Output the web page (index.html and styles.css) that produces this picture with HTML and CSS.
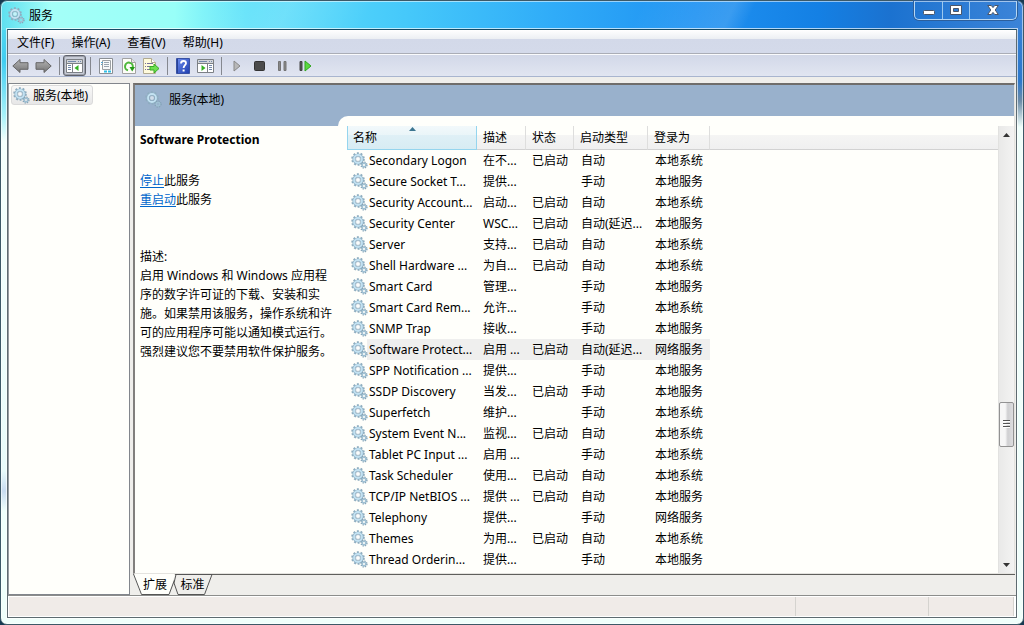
FILE: index.html
```html
<!DOCTYPE html>
<html lang="zh-CN">
<head>
<meta charset="utf-8">
<title>服务</title>
<link rel="stylesheet" href="styles.css">
</head>
<body>
<svg class="defs" aria-hidden="true">
  <defs>
    <linearGradient id="arrowFill" x1="0" y1="0" x2="0" y2="1"><stop offset="0" stop-color="#b4b4b4"/><stop offset="1" stop-color="#747474"/></linearGradient>
    <linearGradient id="helpFill" x1="0" y1="0" x2="1" y2="1"><stop offset="0" stop-color="#6f8ff0"/><stop offset="1" stop-color="#1c3cae"/></linearGradient>
    <symbol id="gear" viewBox="0 0 17 17">
      <circle cx="7" cy="7" r="5.8" fill="none" stroke="#8fadbf" stroke-width="2" stroke-dasharray="1.9 1.75"/>
      <circle cx="7" cy="7" r="4.1" fill="none" stroke="#8fb0c4" stroke-width="3"/>
      <circle cx="7" cy="7" r="4" fill="none" stroke="#c3e2f2" stroke-width="1.8"/>
      <circle cx="7" cy="7" r="2.4" fill="#f8fcff" fill-opacity=".6" stroke="#7897ab" stroke-width=".5"/>
      <circle cx="13" cy="13" r="2.9" fill="none" stroke="#7f9db0" stroke-width="1.4" stroke-dasharray="1.3 .98"/>
      <circle cx="13" cy="13" r="1.8" fill="none" stroke="#9fc0d3" stroke-width="1.5"/>
    </symbol>
  </defs>
</svg>
<div class="window">
  <header class="titlebar">
    <svg class="gear"><use href="#gear"/></svg>
    <h1 class="title">服务</h1>
    <div class="caption-buttons">
      <button class="cap cap-min" aria-label="最小化"><svg width="12" height="5"><rect x=".5" y=".5" width="11" height="4" rx="1" fill="#fff" stroke="#4a5568"/></svg></button>
      <button class="cap" aria-label="最大化"><svg width="12" height="10"><path fill-rule="evenodd" d="M.5.5h11v9H.5zM3.500 3.500v3h5v-3z" fill="#fff" stroke="#4a5568"/></svg></button>
      <button class="cap cap-close" aria-label="关闭"><svg width="12" height="10"><path d="M.7.5h3.600L6 2.600 7.700.5h3.600L8.200 5l3.100 4.500H7.700L6 7.400 4.300 9.500H.7L3.800 5z" fill="#fff" stroke="#4a5568"/></svg></button>
    </div>
  </header>
  <div class="client">
    <nav class="menubar">
      <button class="menu">文件(F)</button><button class="menu">操作(A)</button><button class="menu">查看(V)</button><button class="menu">帮助(H)</button>
    </nav>
    <div class="toolbar" role="toolbar">
      <button class="tool" aria-label="后退"><svg width="17" height="16"><path d="M.8 8 8 1.500v3.200h8v6.600H8v3.200z" fill="url(#arrowFill)" stroke="#666"/></svg></button>
      <button class="tool" aria-label="前进"><svg width="17" height="16"><path d="M16.200 8 9 1.500v3.200H1v6.600h8v3.200z" fill="url(#arrowFill)" stroke="#666"/></svg></button>
      <span class="sep"></span>
      <button class="tool pressed" aria-label="显示/隐藏控制台树"><svg width="17" height="14"><path d="M.5.5h16v13H.5z" fill="#fff" stroke="#7c8085"/><path d="M1 1h15v3H1z" fill="#d3d6da"/><path d="M1 4.500h15M6.500 5v8" stroke="#7c8085"/><path d="M2 2.500h8M12 2.500h1M14 2.500h1M2 6.500h3M2 8.500h3M2 10.500h3" stroke="#7389aa"/><path d="M12.500 6v6L8.500 9z" fill="#35b224"/></svg></button>
      <span class="sep"></span>
      <button class="tool" aria-label="属性"><svg width="16" height="16"><path d="M1.500.5h13v15h-13z" fill="#fff" stroke="#8b8f94"/><path d="M4.500 2.500h8v9h-8z" fill="#f7f9fb" stroke="#9ca0a4"/><path d="M6 4.500h5M6 6.500h5M6 8.500h5" stroke="#9aa5b0"/><path d="M3 4.500h2M3 6.500h1" stroke="#57a5d0"/><path d="M6 13.500h3M10 13.500h3" stroke="#31bde4" stroke-width="2"/></svg></button>
      <button class="tool" aria-label="刷新"><svg width="14" height="16"><path d="M.5.5h9l4 4v11H.5z" fill="#fdfdf8" stroke="#a2a2a2"/><path d="M9.500.5v4h4" fill="#e8e8e8" stroke="#a2a2a2"/><path d="M6 12.300A3.900 3.900 0 1 1 10.800 9" fill="none" stroke="#4eb83c" stroke-width="2"/><path d="M7.500 9h5.500l-2.800 4.500z" fill="#249b18"/></svg></button>
      <button class="tool" aria-label="导出列表"><svg width="17" height="16"><path d="M.5.500h8l4 4v11H.5z" fill="#fffbdc" stroke="#b1aa91"/><path d="M8.500.5v4h4" fill="#fff" stroke="#b1aa91"/><path d="M2 5.500h1M2 8.500h1M2 11.500h1M4 5.500h6M4 8.500h4M4 11.500h4" stroke="#77739a"/><path d="M7 8.500h4V6l5 4.500-5 4.500v-3H7z" fill="#6ee050" stroke="#38ad26"/></svg></button>
      <span class="sep"></span>
      <button class="tool" aria-label="帮助"><svg width="14" height="16"><path d="M.5.5h13v15H.5z" fill="url(#helpFill)" stroke="#3851a4"/><path d="M1.500 1v14" stroke="#294396"/><path d="M5 5.500C5 3.800 6 3 7.500 3S10 4 10 5.300C10 7 7.600 7.500 7.600 10" fill="none" stroke="#fff" stroke-width="1.800"/><path d="M6.600 11.500h2v2h-2z" fill="#fff"/></svg></button>
      <button class="tool" aria-label="显示/隐藏操作窗格"><svg width="17" height="14"><path d="M.5.5h16v13H.5z" fill="#fff" stroke="#7c8085"/><path d="M1 1h15v3H1z" fill="#d3d6da"/><path d="M1 4.500h15M10.500 5v8" stroke="#7c8085"/><path d="M2 2.500h8M12 2.500h1M14 2.500h1M12 6.500h3M12 8.500h3M12 10.500h3" stroke="#7389aa"/><path d="M4.500 6v6l4-3z" fill="#35b224"/></svg></button>
      <span class="sep"></span>
      <button class="tool" aria-label="启动服务"><svg width="8" height="12"><path d="M1 1v10l6-5z" fill="#b8b8b8" stroke="#888"/></svg></button>
      <button class="tool" aria-label="停止服务"><svg width="11" height="10"><rect x=".5" y=".5" width="10" height="9" rx="1" fill="#4b4b4b" stroke="#333"/></svg></button>
      <button class="tool" aria-label="暂停服务"><svg width="9" height="10"><path d="M.5.5h2v9h-2zM6 .5h2v9H6z" fill="#888" stroke="#747474"/></svg></button>
      <button class="tool" aria-label="重启动服务"><svg width="13" height="12"><path d="M1 1.500h2v9H1z" fill="#555" stroke="#444"/><path d="M6 1v10l6-5z" fill="#5bd83f" stroke="#31a51f"/></svg></button>
    </div>
    <main class="panes">
      <aside class="tree">
        <a class="node" href="#services"><svg class="gear"><use href="#gear"/></svg>服务(本地)</a>
      </aside>
      <section class="workspace" id="services">
        <div class="view">
          <div class="band"><svg class="gear"><use href="#gear"/></svg>服务(本地)</div>
          <div class="split">
            <div class="detail">
              <h2 class="name">Software Protection</h2>
              <p class="actions"><a href="#stop">停止</a>此服务<br><a href="#restart">重启动</a>此服务</p>
              <p class="desc">描述:<br>启用 Windows 和 Windows 应用程序的数字许可证的下载、安装和实施。如果禁用该服务，操作系统和许可的应用程序可能以通知模式运行。强烈建议您不要禁用软件保护服务。</p>
            </div>
            <div class="list">
              <table class="services">
                <colgroup><col class="c-name"><col class="c-desc"><col class="c-state"><col class="c-type"><col class="c-logon"><col></colgroup>
                <thead><tr><th class="sorted">名称<svg class="sort" width="7" height="4"><path d="M0 4 3.500 0 7 4z" fill="#3c7590"/></svg></th><th>描述</th><th>状态</th><th>启动类型</th><th>登录为</th><th></th></tr></thead>
                <tbody id="rows"></tbody>
              </table>
              <div class="scrollbar">
                <button class="arrow" aria-label="向上滚动"><svg width="7" height="4"><path d="M0 4 3.500 0 7 4z" fill="#333"/></svg></button>
                <div class="track"><div class="thumb"><svg width="7" height="8"><path d="M0 .5h7M0 3.500h7M0 6.500h7" stroke="#555"/><path d="M0 1.500h7M0 4.500h7M0 7.500h7" stroke="#fff"/></svg></div></div>
                <button class="arrow" aria-label="向下滚动"><svg width="7" height="4"><path d="M0 0 3.500 4 7 0z" fill="#333"/></svg></button>
              </div>
            </div>
          </div>
        </div>
        <div class="tabs">
          <button class="tab tab-on"><svg class="shape" width="42" height="21"><path d="M0 0 8 20.500h28L42 0z" fill="#fffffb"/><path d="M.5 0 8.500 20.500H36L41.500 6" fill="none" stroke="#555"/></svg><span>扩展</span></button>
          <button class="tab tab-off"><svg class="shape" width="40" height="21"><path d="M3 .5h36L31.500 20.500H5L1 9z" fill="#efeeeb" stroke="#555"/></svg><span>标准</span></button>
        </div>
      </section>
    </main>
    <footer class="status"><span class="cell cell-main"></span><span class="cell cell-mid"></span><span class="cell cell-end"></span></footer>
  </div>
</div>
<script src="services.js"></script>
</body>
</html>
```
FILE: styles.css
```css
* { box-sizing: border-box; }

body {
  margin: 0;
  background: #173a52;
  color: #000;
  font: 12px/19px "Noto Sans", "Noto Sans CJK SC", sans-serif;
}

button {
  padding: 0;
  border: 0;
  background: none;
  color: inherit;
  font: inherit;
}

svg { display: block; flex: none; }
.defs { position: absolute; width: 0; height: 0; }
.gear { width: 17px; height: 17px; }

.window {
  display: flex;
  flex-direction: column;
  min-height: 100vh;
  padding: 0 6px 6px;
  border: 1px solid #3c5967;
  border-radius: 7px;
  background:
    linear-gradient(115deg, transparent 20%, #ffffff22 28%, transparent 36%, transparent 62%, #ffffff22 71%, transparent 73%) top / 100% 29px no-repeat,
    linear-gradient(90deg, #5edff0, #a4fff8 50px, #98fff8 17%, #60e2fa 24%, #45c8fa 40%, #30acf8 54%, #1f92f2 68%, #1480e4 80%, #1b72d0 87%, #3c84d8) top / 100% 29px no-repeat,
    linear-gradient(#5edff0, #40cdf0 60px, #a8f2fa 115px, #f4fffc 140px, #e8fbfa 470px, #c8dcf0 490px, #effffb 510px, #effffb) left / 7px 100% no-repeat,
    linear-gradient(#3c84d8, #2c78cc 80px, #6c8ca8 100px, #effffb 126px, #effffb) right / 7px 100% no-repeat,
    #effffb;
  box-shadow: inset 0 0 0 1px #ffffff88;
}

.titlebar {
  display: flex;
  height: 28px;
  padding-left: 1px;
  align-items: center;
}
.title { margin: 0 0 0 4px; font-size: 12px; font-weight: 400; }
.caption-buttons {
  display: flex;
  align-self: flex-start;
  height: 19px;
  margin-left: auto;
  border: 1px solid #b6d7f4;
  border-top: 0;
  border-radius: 0 0 5px 5px;
  box-shadow: 0 0 0 1px #2c5f9c;
}
.cap {
  display: flex;
  width: 27px;
  align-items: center;
  justify-content: center;
  border-right: 1px solid #9cc8ee;
}
.cap-min { width: 28px; padding-top: 4px; }
.cap-close { width: 46px; border-right: 0; }

.client {
  display: flex;
  flex: 1;
  flex-direction: column;
  border: 1px solid #5d6b70;
  border-top-color: #154a66;
  background: #efeeeb;
  box-shadow: 0 0 0 1px #ffffffaa;
}

.menubar {
  display: flex;
  height: 24px;
  padding: 0 1px;
  align-items: center;
  border-bottom: 1px solid #aaadb6;
  background: linear-gradient(#fff, #eceff3 9px, #d3d9e9 9px, #d4daea);
}
.menu { padding: 1px 9px 0 8px; }

.toolbar {
  display: flex;
  height: 23px;
  padding-left: 1px;
  align-items: center;
  border-top: 1px solid #fafbfd;
  border-bottom: 1px solid #a9b5cf;
  background: linear-gradient(#d2d8e8, #e1e5f1);
}
.tool {
  display: flex;
  width: 23px;
  height: 21px;
  align-items: center;
  justify-content: center;
}
.pressed {
  border: 1px solid #5f626c;
  border-radius: 3px;
  background: #c9cdd8;
  box-shadow: inset 0 0 0 1px #9da1ab;
}
.sep {
  width: 8px;
  height: 18px;
  background: linear-gradient(#85888f, #85888f) center / 1px 100% no-repeat;
}

.panes { display: flex; flex: 1; padding: 6px 1px 0 0; gap: 3px; }

.tree {
  width: 122px;
  padding: 1px 2px;
  border: 1px solid #82868c;
  border-left-color: #989ca2;
  background: #fffffb;
}
.node {
  display: inline-flex;
  height: 20px;
  padding: 0 4px 0 1px;
  gap: 3px;
  align-items: center;
  border: 1px solid #dadada;
  border-radius: 3px;
  background: linear-gradient(#f9f9f8, #e7e7e7);
  color: inherit;
  text-decoration: none;
}

.workspace { display: flex; flex: 1; flex-direction: column; min-width: 0; }
.view {
  display: flex;
  flex: 1;
  flex-direction: column;
  border: solid #e4e3df;
  border-width: 2px 1px 1px 2px;
  border-top-color: #6f6d6b;
  border-left-color: #817f7d;
  background: #99b1cc;
}
.band {
  display: flex;
  height: 31px;
  padding: 0 10px 3px;
  gap: 7px;
  align-items: center;
}
.split { display: grid; grid-template-columns: 203px 1fr; flex: 1; }
.detail { margin-top: 10px; padding: 4px 2px 0 5px; background: #fffffb; }
.name { margin: 0; font-size: 12px; font-weight: 700; }
.actions { margin: 22px 0 38px; }
.actions a { color: #0066cc; text-underline-offset: 2px; }
.desc { margin: 0; }

.list {
  display: flex;
  min-width: 0;
  padding: 10px 0 0 9px;
  border-top-left-radius: 10px;
  background: #fffffb;
}
.services {
  width: 100%;
  align-self: flex-start;
  border-collapse: separate;
  border-spacing: 0;
  table-layout: fixed;
}
.c-name { width: 130px; }
.c-desc { width: 49px; }
.c-state { width: 48px; }
.c-type { width: 74px; }
.c-logon { width: 62px; }
.services th {
  height: 24px;
  padding: 0 0 0 6px;
  border-right: 1px solid #dededd;
  border-bottom: 1px solid #d2d2d2;
  background: linear-gradient(#fffffb 9px, #f5f5f4 9px, #f0f0f0);
  font-weight: 400;
  text-align: left;
  white-space: nowrap;
}
.services th:last-child { border-right: 0; }
.services .sorted {
  position: relative;
  border: solid #95d5ee;
  border-width: 0 1px 1px;
  padding-left: 5px;
  background: linear-gradient(#f2f9fb, #eaf5f8 9px, #dff0f6 9px, #d7ecf3);
}
.sort { position: absolute; top: 1px; left: 61px; }
.services td {
  height: 21px;
  padding: 0 0 0 6px;
  line-height: 21px;
  white-space: nowrap;
}
.services td:nth-child(1) { padding-left: 4px; }
.services td:nth-child(4), .services td:nth-child(5) { padding-left: 7px; }
.svc { display: flex; gap: 1px; align-items: center; }
.selected td:not(:last-child) { background: #efefee; }
.selected td:first-child { background: linear-gradient(90deg, #fffffb 20px, #efefee 20px); }

.scrollbar {
  display: flex;
  flex: none;
  width: 16px;
  flex-direction: column;
  border-left: 1px solid #e2e2e0;
  background: linear-gradient(90deg, #e9e9e8, #f3f3f2);
}
.arrow { display: flex; height: 17px; align-items: center; justify-content: center; }
.track {
  display: grid;
  flex: 1;
  grid-template-rows: 258fr 45px 109fr;
}
.thumb {
  display: flex;
  grid-row: 2;
  align-items: center;
  justify-content: center;
  border: 1px solid #929292;
  border-radius: 2px;
  background: linear-gradient(90deg, #f6f6f6 40%, #cfcfd1 60%, #dedee0);
}

.tabs {
  display: flex;
  height: 21px;
  background: linear-gradient(#5f5f5c, #5f5f5c) top / 100% 1px no-repeat;
}
.tab { position: relative; height: 21px; }
.tab-on { width: 41px; padding-left: 3px; z-index: 1; }
.tab-off { width: 37px; }
.shape { position: absolute; top: 0; left: 0; }
.tab-off .shape { left: -1px; }
.tab span { position: relative; }

.status {
  display: flex;
  height: 22px;
  padding: 1px 2px 1px 1px;
  border-top: 1px solid #8c8d8b;
  background: #fff;
}
.cell { border-right: 1px solid #d5d3cf; background: #f0ebe8; }
.cell-main { flex: 1; }
.cell-mid { width: 133px; }
.cell-end { width: 85px; }
```
FILE: services.js
```js
const services = [
  ["Secondary Logon", "在不...", "已启动", "自动", "本地系统"],
  ["Secure Socket T...", "提供...", "", "手动", "本地服务"],
  ["Security Account...", "启动...", "已启动", "自动", "本地系统"],
  ["Security Center", "WSC...", "已启动", "自动(延迟...", "本地服务"],
  ["Server", "支持...", "已启动", "自动", "本地系统"],
  ["Shell Hardware ...", "为自...", "已启动", "自动", "本地系统"],
  ["Smart Card", "管理...", "", "手动", "本地服务"],
  ["Smart Card Rem...", "允许...", "", "手动", "本地系统"],
  ["SNMP Trap", "接收...", "", "手动", "本地服务"],
  ["Software Protect...", "启用 ...", "已启动", "自动(延迟...", "网络服务"],
  ["SPP Notification ...", "提供...", "", "手动", "本地服务"],
  ["SSDP Discovery", "当发...", "已启动", "手动", "本地服务"],
  ["Superfetch", "维护...", "", "手动", "本地系统"],
  ["System Event N...", "监视...", "已启动", "自动", "本地系统"],
  ["Tablet PC Input ...", "启用 ...", "", "手动", "本地系统"],
  ["Task Scheduler", "使用...", "已启动", "自动", "本地系统"],
  ["TCP/IP NetBIOS ...", "提供 ...", "已启动", "自动", "本地服务"],
  ["Telephony", "提供...", "", "手动", "网络服务"],
  ["Themes", "为用...", "已启动", "自动", "本地系统"],
  ["Thread Orderin...", "提供...", "", "手动", "本地服务"]
];

const gear = '<svg class="gear"><use href="#gear"/></svg>';
document.getElementById("rows").innerHTML = services.map(([name, ...rest]) =>
  `<tr${name.startsWith("Software") ? ' class="selected"' : ""}>` +
  `<td><span class="svc">${gear}${name}</span></td>` +
  rest.map((text) => `<td>${text}</td>`).join("") +
  "<td></td></tr>"
).join("");
```
